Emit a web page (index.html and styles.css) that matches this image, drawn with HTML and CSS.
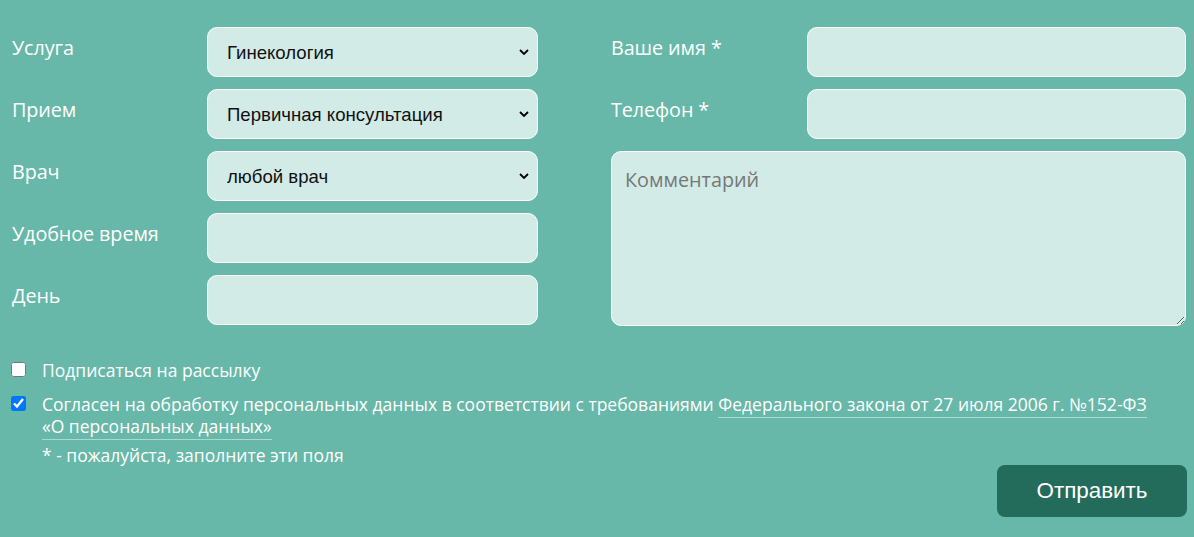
FILE: index.html
```html
<!DOCTYPE html>
<html lang="ru">
<head>
  <meta charset="UTF-8" />
  <meta name="viewport" content="width=device-width, initial-scale=1.0"/>
  <title>Запись на прием</title>
  <link rel="stylesheet" href="styles.css">
</head>
<body>

  <!-- Appointment form -->
  <form class="booking">
    <div class="fields">
      <div class="col col-left">
        <div class="row">
          <label for="service">Услуга</label>
          <div class="select-wrap">
            <select id="service">
              <option>Гинекология</option>
            </select>
            <svg class="chevron" viewBox="0 0 10 6" width="10" height="6"><path d="M1 1l4 4 4-4" fill="none" stroke="#000" stroke-width="1.8"/></svg>
          </div>
        </div>
        <div class="row">
          <label for="visit">Прием</label>
          <div class="select-wrap">
            <select id="visit">
              <option>Первичная консультация</option>
            </select>
            <svg class="chevron" viewBox="0 0 10 6" width="10" height="6"><path d="M1 1l4 4 4-4" fill="none" stroke="#000" stroke-width="1.8"/></svg>
          </div>
        </div>
        <div class="row">
          <label for="doctor">Врач</label>
          <div class="select-wrap">
            <select id="doctor">
              <option>любой врач</option>
            </select>
            <svg class="chevron" viewBox="0 0 10 6" width="10" height="6"><path d="M1 1l4 4 4-4" fill="none" stroke="#000" stroke-width="1.8"/></svg>
          </div>
        </div>
        <div class="row">
          <label for="time">Удобное время</label>
          <input type="text" id="time" />
        </div>
        <div class="row">
          <label for="day">День</label>
          <input type="text" id="day" />
        </div>
      </div>

      <div class="col col-right">
        <div class="row">
          <label for="name">Ваше имя *</label>
          <input type="text" id="name" />
        </div>
        <div class="row">
          <label for="phone">Телефон *</label>
          <input type="tel" id="phone" />
        </div>
        <textarea class="comment" placeholder="Комментарий"></textarea>
      </div>
    </div>

    <div class="agree">
      <label class="check">
        <input type="checkbox" />
        <span>Подписаться на рассылку</span>
      </label>
      <label class="check">
        <input type="checkbox" checked />
        <span>Согласен на обработку персональных данных в соответствии с требованиями <a href="#">Федерального закона от 27 июля 2006 г. №152-ФЗ «О персональных данных»</a></span>
      </label>
      <p class="note">* - пожалуйста, заполните эти поля</p>
    </div>

    <div class="actions">
      <button type="submit" class="send">Отправить</button>
    </div>
  </form>

</body>
</html>
```

FILE: styles.css
```css
* {
  box-sizing: border-box;
}

body {
  margin: 0;
  background: #67b8a8;
  font-family: 'Open Sans', 'Noto Sans', sans-serif;
  color: #fff;
}

.booking {
  padding: 27px 8px 20px 12px;
}

.fields {
  display: flex;
  gap: 73px;
}

.col {
  display: flex;
  flex-direction: column;
  gap: 12px;
}

.col-left {
  width: 526px;
}

.col-right {
  flex: 1;
}

.row {
  display: flex;
  align-items: flex-start;
}

.row label {
  flex: 0 0 195px;
  font-size: 19.8px;
  line-height: 24px;
  padding-top: 9px;
  letter-spacing: -0.1px;
}

.col-right .row label {
  flex-basis: 196px;
}

.select-wrap {
  position: relative;
  flex: 1;
}

.chevron {
  position: absolute;
  right: 9px;
  top: 22px;
  pointer-events: none;
}

select,
input[type="text"],
input[type="tel"],
textarea {
  width: 100%;
  height: 50px;
  background: #d2ebe6;
  border: 1px solid #fff;
  border-radius: 10px;
  color: #111;
  outline: none;
}

.row input {
  flex: 1;
}

select {
  appearance: none;
  font-family: 'Liberation Sans', Arial, sans-serif;
  font-size: 18.6px;
  padding: 0 30px 0 19px;
}

.comment {
  height: 175px;
  resize: vertical;
  font-family: 'Open Sans', 'Noto Sans', sans-serif;
  font-size: 19.8px;
  padding: 14px 13px;
}

.comment::placeholder {
  color: #777;
}

.agree {
  margin-top: 33px;
  padding-right: 36px;
  font-size: 17.5px;
  line-height: 22px;
}

.check {
  display: flex;
  align-items: flex-start;
  gap: 16px;
  margin-bottom: 12px;
}

.check input {
  margin: 3px 0 0 -1px;
  width: 15px;
  height: 15px;
  flex: 0 0 15px;
}

.check a {
  color: #fff;
  text-decoration: none;
  border-bottom: 1px solid rgba(255, 255, 255, 0.45);
  padding-bottom: 1px;
}

.note {
  margin: -5px 0 0 30px;
}

.actions {
  display: flex;
  justify-content: flex-end;
}

.send {
  width: 190px;
  height: 52px;
  margin-right: -1px;
  margin-top: -1px;
  background: #236b5a;
  color: #fff;
  border: none;
  border-radius: 8px;
  font-family: 'Liberation Sans', Arial, sans-serif;
  font-size: 22.4px;
  cursor: pointer;
}
```
